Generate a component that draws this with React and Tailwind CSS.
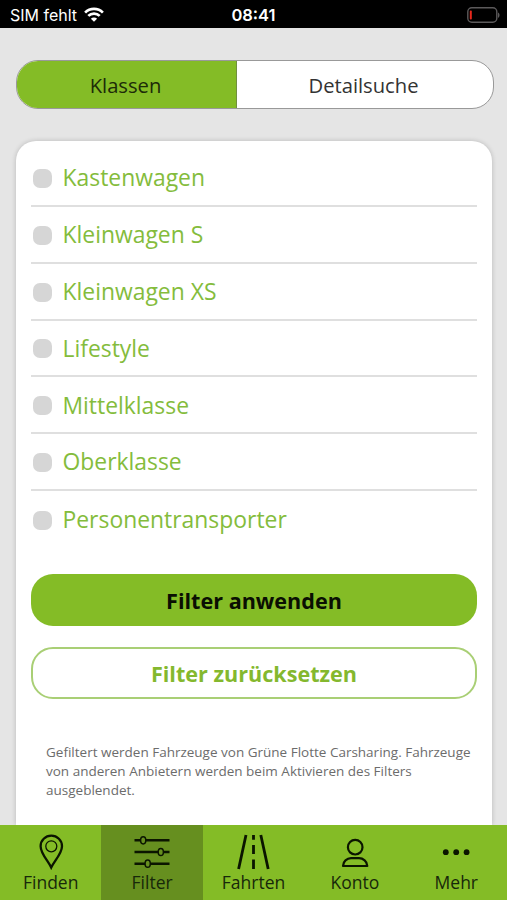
import { useState } from "react";

const CLASSES = [
  "Kastenwagen",
  "Kleinwagen S",
  "Kleinwagen XS",
  "Lifestyle",
  "Mittelklasse",
  "Oberklasse",
  "Personentransporter",
];

function WifiIcon() {
  return (
    <svg width="20" height="15" viewBox="0 0 20 15" fill="none" stroke="#fff" strokeWidth="2.7">
      <path d="M1.1 5.6a12.6 12.6 0 0 1 17.8 0" />
      <path d="M4.3 8.9a8.1 8.1 0 0 1 11.4 0" />
      <path d="M10 14.8l-3.1-3.1a4.4 4.4 0 0 1 6.2 0z" fill="#fff" stroke="none" />
    </svg>
  );
}

function BatteryIcon() {
  return (
    <svg width="34" height="16" viewBox="0 0 34 16" fill="none">
      <rect x="0.8" y="0.8" width="29" height="14.4" rx="4" stroke="#5c5a5b" strokeWidth="1.4" />
      <rect x="2.8" y="3.6" width="2" height="9" rx="0.8" fill="#e8281c" />
      <path d="M31 5.4c2 .6 2 4.7 0 5.3z" fill="#5c5a5b" />
    </svg>
  );
}

function PinIcon() {
  return (
    <svg width="36" height="36" viewBox="0 0 36 36" fill="none" stroke="#0b1500">
      <path d="M18.2 33.5C15.200 27 7.600 19.500 7.600 12.200a10.700 10.500 0 0 1 21.400 0C29 19.500 21.200 27 18.200 33.500z" strokeWidth="2.3" />
      <circle cx="18.3" cy="12.3" r="5.5" strokeWidth="1.3" />
    </svg>
  );
}

function SlidersIcon() {
  return (
    <svg width="36" height="36" viewBox="0 0 36 36" fill="none" stroke="#0b1500">
      <path d="M0.5 6.3h6M12 6.3h23.5M0.5 18h23.5M29.5 18h6M0.5 29.7h10.5M16.5 29.7h19" strokeWidth="2.5" />
      <ellipse cx="9.2" cy="6.3" rx="2.6" ry="3.6" strokeWidth="1.5" />
      <ellipse cx="26.8" cy="18" rx="2.6" ry="3.6" strokeWidth="1.5" />
      <ellipse cx="13.7" cy="29.7" rx="2.6" ry="3.6" strokeWidth="1.5" />
    </svg>
  );
}

function RoadIcon() {
  return (
    <svg width="36" height="36" viewBox="0 0 36 36" fill="none" stroke="#0b1500">
      <path d="M11 1L3.6 35M25.8 1l7.4 34" strokeWidth="2.8" />
      <path d="M18.5 1v4.8M18.500 11v9M18.500 25.500v9.500" strokeWidth="2.8" />
    </svg>
  );
}

function UserIcon() {
  return (
    <svg width="36" height="36" viewBox="0 0 36 36" fill="none" stroke="#0b1500" strokeWidth="2.2">
      <circle cx="18.2" cy="13.2" r="7.3" />
      <path d="M6 32c0-4.500 4-7.800 8-7.800h8c4 0 8.300 3.300 8.300 7.800z" strokeLinejoin="round" />
    </svg>
  );
}

function DotsIcon() {
  return (
    <svg width="36" height="36" viewBox="0 0 36 36" fill="#0b1500">
      <circle cx="7.8" cy="18.2" r="2.9" />
      <circle cx="18.2" cy="18.2" r="2.9" />
      <circle cx="28.6" cy="18.2" r="2.9" />
    </svg>
  );
}

const NAV = [
  { label: "Finden", icon: PinIcon },
  { label: "Filter", icon: SlidersIcon },
  { label: "Fahrten", icon: RoadIcon },
  { label: "Konto", icon: UserIcon },
  { label: "Mehr", icon: DotsIcon },
];

export default function App() {
  const [selected, setSelected] = useState([]);

  const toggle = (name) => {
    setSelected((current) =>
      current.includes(name) ? current.filter((item) => item !== name) : [...current, name]
    );
  };

  return (
    <div className="flex h-[900px] w-full flex-col overflow-hidden bg-[#e5e5e5] font-['Open_Sans',sans-serif]">
      <header className="grid h-7 shrink-0 grid-cols-3 items-center bg-black pl-[10px] pr-[6px] font-[Inter,sans-serif] text-white">
        <div className="flex items-center gap-[7px]">
          <span className="pt-px text-[16px] leading-7">SIM fehlt</span>
          <WifiIcon />
        </div>
        <span className="pr-[4px] pt-px text-center text-[16.5px] font-semibold leading-7">08:41</span>
        <div className="flex justify-end">
          <BatteryIcon />
        </div>
      </header>

      <main className="flex min-h-0 flex-1 flex-col px-4 pt-8">
        <div className="flex h-[49px] w-[478px] shrink-0 overflow-hidden rounded-[22px] border border-[#999] bg-white text-[20.2px] text-[#333]">
          <button type="button" className="w-[220px] border-r border-[#71903f] bg-[#84bc26] pr-[2px] pt-px text-[#1c2b08]">
            Klassen
          </button>
          <button type="button" className="flex-1 pr-[3px] pt-px">
            Detailsuche
          </button>
        </div>

        <section className="mt-8 w-[476px] flex-1 rounded-t-[20px] bg-white px-[15px] pt-[9px] shadow-[0_0_5px_rgba(0,0,0,0.2)]">
          <ul className="divide-y-2 divide-[#dfdfdf]">
            {CLASSES.map((name) => (
              <li key={name} className="h-[56.85px]">
                <button
                  type="button"
                  onClick={() => toggle(name)}
                  className="flex h-full w-full items-center gap-[10.5px] pl-[2px] pt-[2px] text-left text-[22.9px] text-[#84bc3c]"
                >
                  <span
                    className={`size-[19px] rounded-[7px] ${selected.includes(name) ? "bg-[#84bc26]" : "bg-[#d6d6d6]"}`}
                  />
                  {name}
                </button>
              </li>
            ))}
          </ul>

          <button
            type="button"
            className="mt-[26.5px] block h-[52px] w-full rounded-[22px] bg-[#84bc26] pt-[2px] text-[21.6px] font-bold text-[#0a0f02]"
          >
            Filter anwenden
          </button>
          <button
            type="button"
            className="mt-[20.5px] block h-[52px] w-full rounded-[22px] border-2 border-[#a9cf75] pt-[2px] text-[21.6px] font-bold text-[#84b82e]"
          >
            Filter zurücksetzen
          </button>

          <p className="ml-[15px] mt-[43.6px] whitespace-nowrap text-[13.5px] leading-[19px] text-[#6c6c6c]">
            Gefiltert werden Fahrzeuge von Grüne Flotte Carsharing. Fahrzeuge
            <br />
            von anderen Anbietern werden beim Aktivieren des Filters
            <br />
            ausgeblendet.
          </p>
        </section>
      </main>

      <nav className="z-10 grid h-[75px] shrink-0 grid-cols-5 bg-[#84bc26] text-[17.5px] text-[#17280a]">
        {NAV.map(({ label, icon: Icon }) => (
          <button
            key={label}
            type="button"
            className={`flex flex-col items-center pt-[9px] ${label === "Filter" ? "bg-[#668f1f]" : ""}`}
          >
            <Icon />
            <span className="leading-[25px]">{label}</span>
          </button>
        ))}
      </nav>
    </div>
  );
}
